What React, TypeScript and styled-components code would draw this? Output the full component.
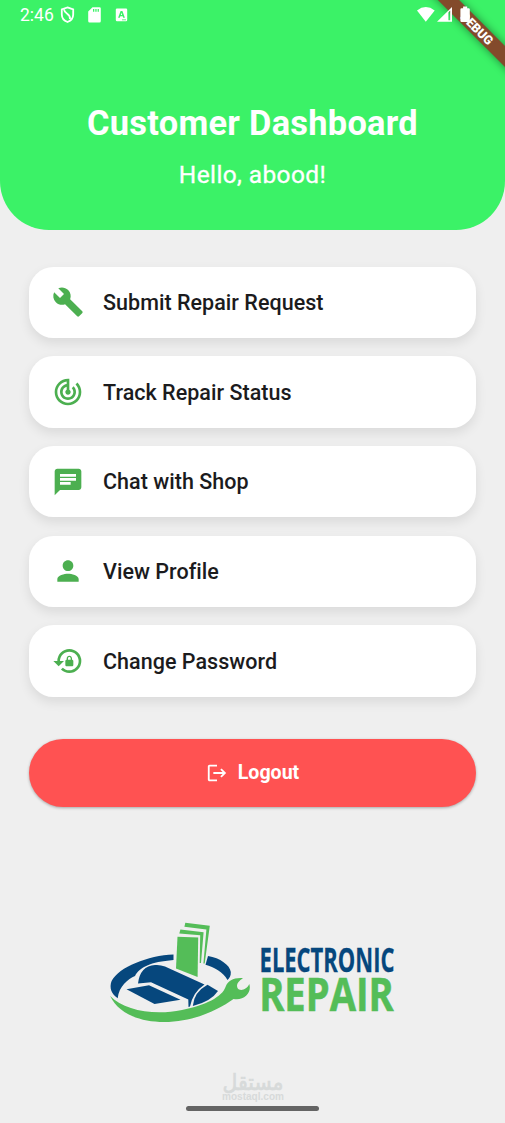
import React from "react";
import styled, { createGlobalStyle } from "styled-components";
import { MdBuild, MdTrackChanges, MdChat, MdPerson, MdLockReset, MdLogout } from "react-icons/md";

const GlobalStyle = createGlobalStyle`
  * { box-sizing: border-box; }
  body { margin: 0; background: #efefef; font-family: Roboto, "Liberation Sans", sans-serif; }
`;

const Screen = styled.div`
  position: relative;
  display: flex;
  flex-direction: column;
  width: 505px;
  height: 1123px;
  overflow: hidden;
  background: #efefef;
`;

const Header = styled.header`
  display: flex;
  flex-direction: column;
  align-items: center;
  height: 230px;
  flex: none;
  background: #3bf267;
  border-radius: 0 0 49px 49px;
  color: #fff;
`;

const StatusBar = styled.div`
  position: relative;
  z-index: 2;
  display: flex;
  align-items: center;
  justify-content: space-between;
  width: 100%;
  height: 30px;
  padding: 0 34px 0 20px;
`;

const StatusGroup = styled.div`
  display: flex;
  align-items: center;
`;

const Clock = styled.span`
  width: 34px;
  margin-right: 6px;
  font-size: 17.5px;
  line-height: 20px;
`;

const Title = styled.h1`
  margin: 73px 0 0;
  font-size: 34.4px;
  line-height: 40px;
  font-weight: 700;
  letter-spacing: 0.27px;
  white-space: nowrap;
`;

const Greeting = styled.p`
  margin: 17px 0 0;
  font-size: 24.5px;
  line-height: 29px;
  font-weight: 400;
  letter-spacing: 0.38px;
  -webkit-text-stroke: 0.3px #fff;
`;

const RibbonCorner = styled.div`
  position: absolute;
  top: 0;
  right: 0;
  width: 90px;
  height: 90px;
  overflow: hidden;
`;

const Ribbon = styled.div`
  position: absolute;
  top: 21px;
  right: -42px;
  width: 140px;
  height: 15px;
  transform: rotate(45deg);
  background: #834a2b;
  box-shadow: 0 0 8px rgba(0, 0, 0, 0.45);
  color: #fff;
  font-size: 12.5px;
  line-height: 15px;
  font-weight: 900;
  text-align: center;
`;

const Menu = styled.nav`
  display: flex;
  flex-direction: column;
  gap: 18.4px;
  padding: 36.7px 29px 0;
`;

const MenuCard = styled.button`
  display: flex;
  align-items: center;
  gap: 19.5px;
  height: 71.3px;
  padding: 0 22.5px;
  border: 0;
  border-radius: 24.5px;
  background: #fff;
  box-shadow: 0 5px 12px rgba(0, 0, 0, 0.09);
  color: #4caf50;
  text-align: left;
`;

const MenuLabel = styled.span`
  padding-top: 1px;
  color: #1b1b1d;
  font: 500 21.5px/26px Roboto, "Liberation Sans", sans-serif;
  letter-spacing: 0.03px;
`;

const LogoutButton = styled.button`
  display: flex;
  align-items: center;
  justify-content: center;
  gap: 10px;
  height: 68px;
  margin: 42.3px 29px 0;
  flex: none;
  border: 0;
  border-radius: 34px;
  background: #ff5252;
  box-shadow: 0 1px 3px rgba(0, 0, 0, 0.3);
  color: #fff;
  font: 700 19.6px/24px Roboto, "Liberation Sans", sans-serif;
`;

const Brand = styled.div`
  display: flex;
  padding-left: 100px;
  margin-top: 102.5px;
  height: 120px;
`;

const Footer = styled.footer`
  display: flex;
  flex-direction: column;
  align-items: center;
  margin-top: 36px;
`;

const HomeHandle = styled.div`
  width: 133px;
  height: 5px;
  border-radius: 3px;
  background: #646464;
`;

const Drawing = styled.svg`
  display: block;
  overflow: visible;
`;

const items = [
  { label: "Submit Repair Request", Icon: MdBuild },
  { label: "Track Repair Status", Icon: MdTrackChanges },
  { label: "Chat with Shop", Icon: MdChat },
  { label: "View Profile", Icon: MdPerson },
  { label: "Change Password", Icon: MdLockReset },
];

const StatusIcons = () => (
  <Drawing width="68" height="20" viewBox="60 5 68 20" fill="#fff">
    <path d="M67.5 7.4 73.2 9.4V14.4C73.2 18.2 70.8 20.7 67.5 22 64.2 20.7 61.8 18.2 61.8 14.4V9.4Z" fill="none" stroke="#fff" strokeWidth="1.8" />
    <path d="M64 9.3C64.6 14.8 70.6 12.8 70 19" fill="none" stroke="#fff" strokeWidth="1.8" />
    <path fillRule="evenodd" d="M92.5 7.2H99.5Q100.8 7.2 100.8 8.5V21Q100.8 22.6 99.5 22.6H89.6Q88.2 22.6 88.2 21V11.6ZM93 9V11.7H94.3V9ZM95.3 9V11.7H96.6V9ZM97.6 9V11.7H98.9V9Z" />
    <path d="M117 8.6H126Q127.2 8.6 127.2 9.8V20Q127.2 21.2 126 21.2H117Q115.8 21.2 115.8 20V9.8Q115.8 8.6 117 8.6Z" />
    <path fill="#3bf267" fillRule="evenodd" d="M120.6 11H122.4L124.9 17.8H123.2L122.7 16.3H120.3L119.8 17.8H118.1ZM121.5 12.7 120.8 15H122.2Z" />
    <path d="M122 19.8H126" stroke="#3bf267" strokeWidth="0.8" />
  </Drawing>
);

const SignalIcons = () => (
  <Drawing width="54" height="20" viewBox="417 5 54 20" fill="#fff">
    <path d="M417 10.4Q425.8 3.6 434.7 10.4L425.8 21.8Z" />
    <path fillRule="evenodd" d="M437 21.8 452 7V21.8ZM448.4 12.4V20.2H450.2V10.6Z" />
    <path d="M463.1 6.6H467.2V8.2H468.6Q469.8 8.2 469.8 9.4V20.8Q469.8 22 468.6 22H461.6Q460.4 22 460.4 20.8V9.4Q460.4 8.2 461.6 8.2H463.1Z" />
  </Drawing>
);

const BrandLogo = () => (
  <Drawing width="300" height="120" viewBox="100 910 300 120">
    <g fill="#06477d">
      <path d="M173.5 954.5C148 955.5 119 967 111.6 981C109 988 111.5 994 117.7 998.3C119 986 128 979 135 976C140 967 150 962 173.5 960Z" />
      <path d="M208 956C220 958 230 965 230.8 972C231 976 229.5 978 227.5 980C223 972 214 967 205.5 964.8Z" />
      <path d="M138 983.5Q140 966 155 965Q160 964.5 165 966.5L204.5 984.5Q193 992 190 1006.5L188.5 1007 188.3 999.5 151 982.2Z" />
      <path d="M126.5 989.2 149 985.2 180.5 999.7 154.5 1004Z" />
      <path d="M192.8 1006Q194 992 207.5 984.8L218 991Q211 1001.5 192.8 1006Z" />
    </g>
    <g fill="#54bd58">
      <path d="M177.5 936.8 198.2 937.6 197.6 977 176 968.5Z" />
      <path d="M180.4 929.5 203.6 932.3 201 963 199.7 963 200.2 935.3 179.3 933.6Z" />
      <path d="M185.3 922.8 209.8 925.8 204.7 963.5 203.4 963.5 206.4 929.5 184.4 926.8Z" />
      <path d="M110.2 996C124 1010 153 1016 182 1010C206 1005 222 997 225.5 987C228 980.5 234 977.5 243 978.2C238 981.5 236 984 237.5 988C240 992 247 989.5 249.3 984C252 993 244 1001 233.5 999C219 1009.5 194 1022 164 1022C139 1022 118 1013 110.2 996Z" />
    </g>
    <g fontFamily="'Open Sans', 'Noto Sans', sans-serif" fontWeight="700">
      <text x="259.6" y="971.5" fontSize="34" fill="#06477d" stroke="#06477d" strokeWidth="0.3" textLength="134.8" lengthAdjust="spacingAndGlyphs">ELECTRONIC</text>
      <text x="259.2" y="1011" fontSize="46.5" fill="#54bd58" stroke="#54bd58" strokeWidth="0.6" textLength="134.6" lengthAdjust="spacingAndGlyphs">REPAIR</text>
    </g>
  </Drawing>
);

const Watermark = () => (
  <Drawing width="70" height="40" viewBox="217 1066 70 40" fill="#d7dada">
    <text x="252" y="1089.5" fontSize="23" stroke="#d7dada" strokeWidth="0.7" fontFamily="'DejaVu Sans', sans-serif" textAnchor="middle" textLength="61" lengthAdjust="spacingAndGlyphs">مستقل</text>
    <text x="221" y="1099.5" fontSize="11" fontWeight="700" fontFamily="'Liberation Sans', sans-serif" textLength="62" lengthAdjust="spacingAndGlyphs">mostaql.com</text>
  </Drawing>
);

export default function App() {
  return (
    <>
      <GlobalStyle />
      <Screen>
        <Header>
          <StatusBar>
            <StatusGroup>
              <Clock>2:46</Clock>
              <StatusIcons />
            </StatusGroup>
            <StatusGroup>
              <SignalIcons />
            </StatusGroup>
          </StatusBar>
          <Title>Customer Dashboard</Title>
          <Greeting>Hello, abood!</Greeting>
        </Header>
        <Menu>
          {items.map(({ label, Icon }) => (
            <MenuCard key={label}>
              <Icon size={32} />
              <MenuLabel>{label}</MenuLabel>
            </MenuCard>
          ))}
        </Menu>
        <LogoutButton>
          <MdLogout size={22} />
          Logout
        </LogoutButton>
        <Brand>
          <BrandLogo />
        </Brand>
        <Footer>
          <Watermark />
          <HomeHandle />
        </Footer>
        <RibbonCorner>
          <Ribbon>DEBUG</Ribbon>
        </RibbonCorner>
      </Screen>
    </>
  );
}
